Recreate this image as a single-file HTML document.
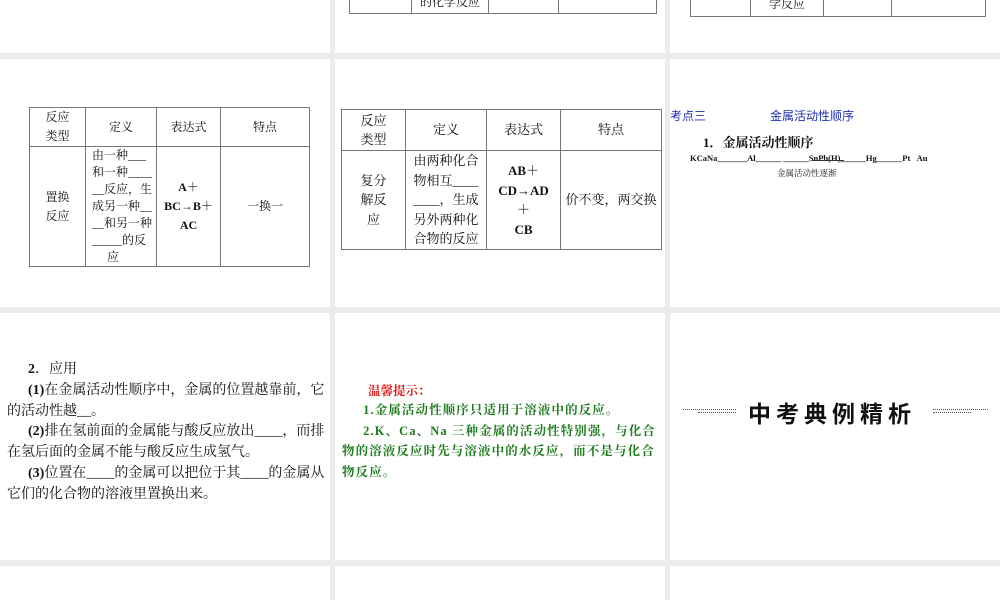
<!DOCTYPE html>
<html><head><meta charset="utf-8"><style>
*{margin:0;padding:0;box-sizing:border-box}
body{width:1000px;height:600px;background:#ebebeb;position:relative;overflow:hidden;font-family:"Liberation Serif","Noto Serif CJK SC",serif;color:#111}
.p{position:absolute;background:#fff;overflow:hidden}
.a{position:absolute;white-space:nowrap}
table{position:absolute;border-collapse:collapse;font-size:12px;text-align:center}
td{border:1px solid #777;line-height:19px;vertical-align:middle}
.t3 td{font-size:13px;line-height:19.5px}
.r3{font-size:14px;line-height:20.8px;position:absolute;left:7px;top:360px;white-space:nowrap}
.b{font-weight:bold}
.g{color:#1d7a1d;font-weight:bold;font-size:12.5px;line-height:20.5px;letter-spacing:1.1px;position:absolute;left:342px;top:400px;white-space:nowrap}
</style></head><body>
<div class="p" style="left:0;top:0;width:330px;height:53px"></div>
<div class="p" style="left:335px;top:0;width:330px;height:53px">
 <table style="left:14px;top:-10px;width:308px;height:24px"><tr><td style="width:62px"></td><td style="width:77px">的化学反应</td><td style="width:70px"></td><td></td></tr></table>
</div>
<div class="p" style="left:670px;top:0;width:330px;height:53px">
 <table style="left:20px;top:-8px;width:296px;height:25px"><tr><td style="width:60px"></td><td style="width:73px">学反应</td><td style="width:68px"></td><td></td></tr></table>
</div>

<div class="p" style="left:0;top:59px;width:330px;height:248px">
 <table style="left:29px;top:48px;width:281px;height:160px">
  <tr style="height:35px"><td style="width:56px">反应<br>类型</td><td style="width:71px">定义</td><td style="width:64px">表达式</td><td>特点</td></tr>
  <tr><td>置换<br>反应</td><td style="text-align:left;padding-left:6px;line-height:17px">由一种___<br>和一种____<br>__反应，生<br>成另一种__<br>__和另一种<br>_____的反<br>&nbsp;&nbsp;&nbsp;&nbsp;&nbsp;应</td><td class="b">A＋<br>BC→B＋<br>AC</td><td>一换一</td></tr>
 </table>
</div>
<div class="p" style="left:335px;top:59px;width:330px;height:248px">
 <table class="t3" style="left:6px;top:50px;width:321px;height:141px">
  <tr style="height:41px"><td style="width:64px">反应<br>类型</td><td style="width:81px">定义</td><td style="width:74px">表达式</td><td>特点</td></tr>
  <tr><td>复分<br>解反<br>应</td><td>由两种化合<br>物相互____<br>____，生成<br>另外两种化<br>合物的反应</td><td class="b">AB＋<br>CD→AD<br>＋<br>CB</td><td>价不变，两交换</td></tr>
 </table>
</div>
<div class="p" style="left:670px;top:59px;width:330px;height:248px">
 <div class="a" style="left:0;top:48px;color:#1f2fb0;font-size:12px;font-family:'Liberation Sans','Noto Sans CJK SC',sans-serif">考点三</div>
 <div class="a" style="left:100px;top:48px;color:#1f2fb0;font-size:12px;font-family:'Liberation Sans','Noto Sans CJK SC',sans-serif">金属活动性顺序</div>
 <div class="a b" style="left:33px;top:73px;font-size:13px">1．金属活动性顺序</div>
 <div class="a b" style="left:20px;top:94px;font-size:8.5px">KCaNa_______Al______ ______SnPb(H)______Hg______Pt &nbsp;&nbsp;Au</div>
 <div class="a" style="left:142px;top:101px;width:32px;border-top:1px solid #333"></div>
 <div class="a" style="left:107px;top:108px;font-size:8.5px">金属活动性逐渐</div>
</div>

<div class="p" style="left:0;top:313px;width:330px;height:247px"></div>
<div class="r3">
 &nbsp;&nbsp;&nbsp;&nbsp;&nbsp;&nbsp;<b>2</b>．应用<br>
 &nbsp;&nbsp;&nbsp;&nbsp;&nbsp;&nbsp;<b>(1)</b>在金属活动性顺序中，金属的位置越靠前，它<br>
 的活动性越__。<br>
 &nbsp;&nbsp;&nbsp;&nbsp;&nbsp;&nbsp;<b>(2)</b>排在氢前面的金属能与酸反应放出____，而排<br>
 在氢后面的金属不能与酸反应生成氢气。<br>
 &nbsp;&nbsp;&nbsp;&nbsp;&nbsp;&nbsp;<b>(3)</b>位置在____的金属可以把位于其____的金属从<br>
 它们的化合物的溶液里置换出来。
</div>
<div class="p" style="left:335px;top:313px;width:330px;height:247px"></div>
<div class="a b" style="left:368px;top:381px;color:#e02020;font-size:12.5px">温馨提示：</div>
<div class="g">
 &nbsp;&nbsp;&nbsp;&nbsp;&nbsp;1.金属活动性顺序只适用于溶液中的反应。<br>
 &nbsp;&nbsp;&nbsp;&nbsp;&nbsp;2.K、Ca、Na 三种金属的活动性特别强，与化合<br>
 物的溶液反应时先与溶液中的水反应，而不是与化合<br>
 物反应。
</div>
<div class="p" style="left:670px;top:313px;width:330px;height:247px">
 <div class="a" style="left:13px;top:96px;width:53px;border-top:1px dotted #555"></div>
 <div class="a" style="left:28px;top:99px;width:38px;border-top:1px dotted #555"></div>
 <div class="a" style="left:263px;top:96px;width:55px;border-top:1px dotted #555"></div>
 <div class="a" style="left:263px;top:99px;width:38px;border-top:1px dotted #555"></div>
 <div class="a" style="left:78px;top:82px;font-size:23px;font-weight:bold;letter-spacing:5px;font-family:'Liberation Sans','Noto Sans CJK SC',sans-serif">中考典例精析</div>
</div>

<div class="p" style="left:0;top:566px;width:330px;height:34px"></div>
<div class="p" style="left:335px;top:566px;width:330px;height:34px"></div>
<div class="p" style="left:670px;top:566px;width:330px;height:34px"></div>
</body></html>
